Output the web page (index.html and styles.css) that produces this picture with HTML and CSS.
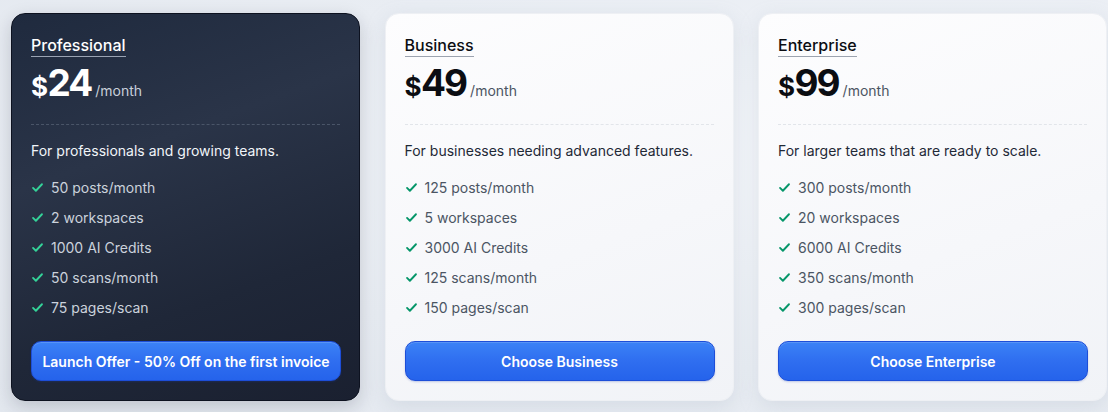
FILE: index.html
```html
<!DOCTYPE html>
<html>
<head>
<meta charset="utf-8">
<link rel="stylesheet" href="styles.css">
</head>
<body>
<div class="plans">
  <div class="card card-dark">
    <div class="title"><span>Professional</span></div>
    <div class="price"><span class="cur">$</span><span class="amt">24</span><span class="per">/month</span></div>
    <div class="divider"></div>
    <p class="desc">For professionals and growing teams.</p>
    <ul class="features">
      <li><svg class="check" viewBox="0 0 16 16"><path d="M2.5 8.5l3.5 3.5 7.5-8"/></svg>50 posts/month</li>
      <li><svg class="check" viewBox="0 0 16 16"><path d="M2.5 8.5l3.5 3.5 7.5-8"/></svg>2 workspaces</li>
      <li><svg class="check" viewBox="0 0 16 16"><path d="M2.5 8.5l3.5 3.5 7.5-8"/></svg>1000 AI Credits</li>
      <li><svg class="check" viewBox="0 0 16 16"><path d="M2.5 8.5l3.5 3.5 7.5-8"/></svg>50 scans/month</li>
      <li><svg class="check" viewBox="0 0 16 16"><path d="M2.5 8.5l3.5 3.5 7.5-8"/></svg>75 pages/scan</li>
    </ul>
    <button class="btn">Launch Offer - 50% Off on the first invoice</button>
  </div>
  <div class="card card-light">
    <div class="title"><span>Business</span></div>
    <div class="price"><span class="cur">$</span><span class="amt">49</span><span class="per">/month</span></div>
    <div class="divider"></div>
    <p class="desc">For businesses needing advanced features.</p>
    <ul class="features">
      <li><svg class="check" viewBox="0 0 16 16"><path d="M2.5 8.5l3.5 3.5 7.5-8"/></svg>125 posts/month</li>
      <li><svg class="check" viewBox="0 0 16 16"><path d="M2.5 8.5l3.5 3.5 7.5-8"/></svg>5 workspaces</li>
      <li><svg class="check" viewBox="0 0 16 16"><path d="M2.5 8.5l3.5 3.5 7.5-8"/></svg>3000 AI Credits</li>
      <li><svg class="check" viewBox="0 0 16 16"><path d="M2.5 8.5l3.5 3.5 7.5-8"/></svg>125 scans/month</li>
      <li><svg class="check" viewBox="0 0 16 16"><path d="M2.5 8.5l3.5 3.5 7.5-8"/></svg>150 pages/scan</li>
    </ul>
    <button class="btn">Choose Business</button>
  </div>
  <div class="card card-light">
    <div class="title"><span>Enterprise</span></div>
    <div class="price"><span class="cur">$</span><span class="amt">99</span><span class="per">/month</span></div>
    <div class="divider"></div>
    <p class="desc">For larger teams that are ready to scale.</p>
    <ul class="features">
      <li><svg class="check" viewBox="0 0 16 16"><path d="M2.5 8.5l3.5 3.5 7.5-8"/></svg>300 posts/month</li>
      <li><svg class="check" viewBox="0 0 16 16"><path d="M2.5 8.5l3.5 3.5 7.5-8"/></svg>20 workspaces</li>
      <li><svg class="check" viewBox="0 0 16 16"><path d="M2.5 8.5l3.5 3.5 7.5-8"/></svg>6000 AI Credits</li>
      <li><svg class="check" viewBox="0 0 16 16"><path d="M2.5 8.5l3.5 3.5 7.5-8"/></svg>350 scans/month</li>
      <li><svg class="check" viewBox="0 0 16 16"><path d="M2.5 8.5l3.5 3.5 7.5-8"/></svg>300 pages/scan</li>
    </ul>
    <button class="btn">Choose Enterprise</button>
  </div>
</div>
</body>
</html>
```
FILE: styles.css
```css
* { box-sizing: border-box; }
html, body { margin: 0; padding: 0; }
body {
  width: 1108px;
  height: 412px;
  overflow: hidden;
  font-family: Inter, "Noto Sans", sans-serif;
  background: radial-gradient(ellipse at 85% 40%, #f4f6fa 0%, #e9edf3 60%, #e3e8ef 100%);
}
.plans {
  display: grid;
  grid-template-columns: repeat(3, 349px);
  gap: 24.5px;
  padding: 13px 0 0 11px;
}
.card {
  height: 388px;
  border-radius: 14px;
  padding: 20px 19px 19px 19px;
  display: flex;
  flex-direction: column;
}
.card-dark {
  background: linear-gradient(160deg, #1f2a3e 0%, #2a3448 35%, #1f2738 70%, #1a2030 100%);
  border: 1px solid #0d1220;
  color: #fff;
  box-shadow: 0 6px 18px rgba(15, 23, 42, 0.18);
}
.card-light {
  background: linear-gradient(160deg, #fdfdfe 0%, #f6f7fa 60%, #f1f3f7 100%);
  border: 1px solid #eef0f4;
  color: #0b0d12;
  box-shadow: 0 6px 20px rgba(148, 163, 184, 0.22);
}
.title {
  font-size: 16px;
  font-weight: 500;
  line-height: 22px;
  height: 24px;
}
.title span {
  display: inline-block;
  border-bottom: 1px solid #8a94a6;
  line-height: 21px;
}
.card-dark .title span { border-bottom-color: #9aa3b3; }
.card-light .title span { border-bottom-color: #9ca3af; }
.price {
  display: flex;
  align-items: baseline;
  margin-top: 2px;
  height: 46px;
}
.cur {
  font-size: 26px;
  font-weight: 700;
  letter-spacing: -0.5px;
}
.amt {
  font-size: 37px;
  font-weight: 700;
  letter-spacing: -2px;
  line-height: 46px;
}
.per {
  font-size: 14px;
  margin-left: 4px;
  font-weight: 400;
}
.card-dark .per { color: #c8cfda; }
.card-light .per { color: #4b5563; }
.divider {
  margin-top: 18px;
  border-top: 1px dashed #4a5568;
}
.card-light .divider { border-top-color: #e2e5ea; }
.desc {
  margin: 17px 0 0 0;
  font-size: 14px;
  line-height: 18px;
}
.card-dark .desc { color: #f1f5f9; }
.card-light .desc { color: #1f2937; }
.features {
  list-style: none;
  margin: 12px 0 0 0;
  padding: 0;
}
.features li {
  display: flex;
  align-items: center;
  height: 30px;
  font-size: 14px;
}
.card-dark .features li { color: #cbd2dc; }
.card-light .features li { color: #4b5563; }
.check {
  width: 13px;
  height: 13px;
  margin-right: 7px;
  fill: none;
  stroke-width: 2.3;
  stroke-linecap: round;
  stroke-linejoin: round;
}
.card-dark .check { stroke: #34d399; }
.card-light .check { stroke: #059669; }
.btn {
  margin-top: auto;
  height: 40px;
  width: 310px;
  padding: 0;
  white-space: nowrap;
  border-radius: 10px;
  border: 1px solid #1d4ed8;
  background: linear-gradient(180deg, #3b82f6 0%, #2f6ef0 50%, #2563eb 100%);
  color: #fff;
  font-family: Inter, "Noto Sans", sans-serif;
  font-size: 14px;
  font-weight: 600;
  box-shadow: inset 0 1px 0 rgba(255,255,255,0.15), 0 1px 2px rgba(30, 64, 175, 0.25);
}
```
